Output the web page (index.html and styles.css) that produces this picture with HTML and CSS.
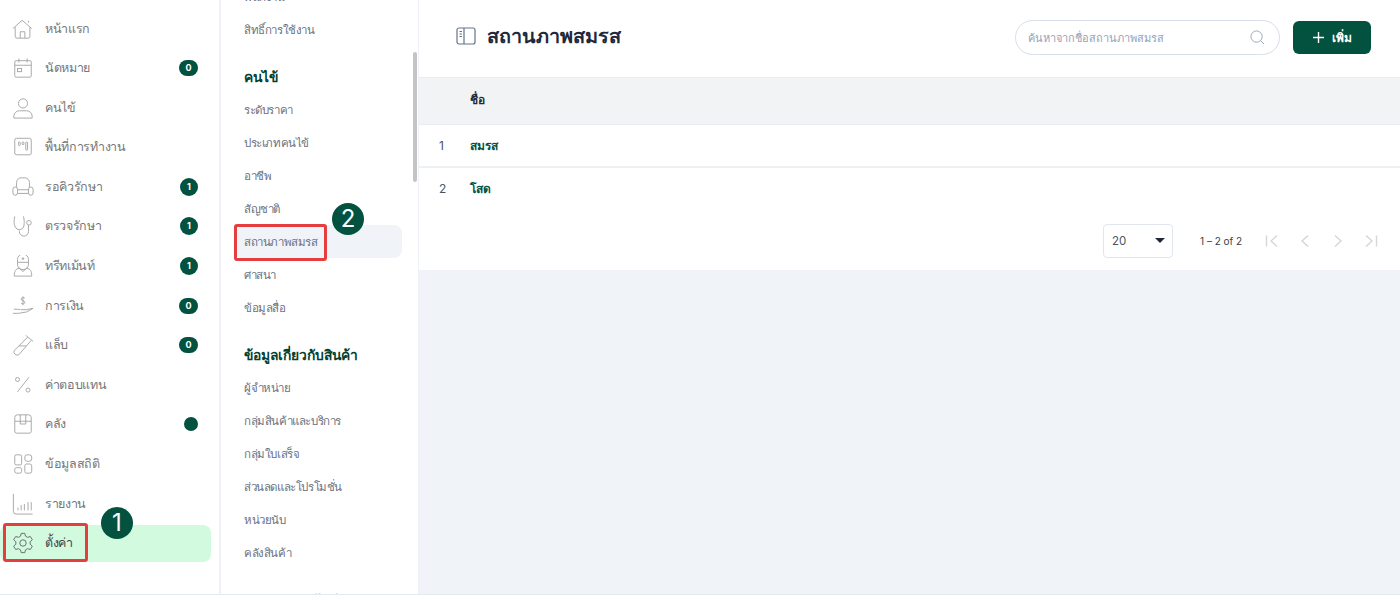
FILE: index.html
```html
<!DOCTYPE html>
<html lang="en">
<head>
  <meta charset="UTF-8" />
  <title>สถานภาพสมรส</title>
  <link rel="stylesheet" href="styles.css">
</head>
<body>

<div class="app">
  <nav class="sidebar">
    <a class="nav-item">
      <svg class="nav-icon" viewBox="0 0 24 24"><path d="M1 11.500 11 2.500l10.500 9M18 5V3M3.500 10v10a2 2 0 0 0 2 2h12a2 2 0 0 0 2-2V10M9 22v-7h5v7"/></svg>
      <span>หน้าแรก</span>
    </a>
    <a class="nav-item">
      <svg class="nav-icon" viewBox="0 0 24 24"><rect x="3" y="4" width="18" height="18" rx="1.500"/><path d="M3 9h18M7.500 1.500V6M16.500 1.500V6"/><rect x="6" y="12.500" width="4.500" height="3.500"/></svg>
      <span>นัดหมาย</span>
      <b class="badge">0</b>
    </a>
    <a class="nav-item">
      <svg class="nav-icon" viewBox="0 0 24 24"><circle cx="12" cy="7" r="5"/><path d="M2 23v-2a6 6 0 0 1 6-6h8a6 6 0 0 1 6 6v2z"/></svg>
      <span>คนไข้</span>
    </a>
    <a class="nav-item">
      <svg class="nav-icon" viewBox="0 0 24 24"><rect x="3" y="2.500" width="18" height="18" rx="2"/><rect x="7" y="6.500" width="2" height="4" rx="1"/><rect x="11" y="6.500" width="2" height="3" rx="1"/><rect x="15" y="6.500" width="2" height="9" rx="1"/></svg>
      <span>พื้นที่การทำงาน</span>
    </a>
    <a class="nav-item">
      <svg class="nav-icon" viewBox="0 0 24 24"><path d="M5 12V7a5 5 0 0 1 5-5h4a5 5 0 0 1 5 5v5M6 15h12M6 19h12"/><rect x="1" y="12" width="5" height="9" rx="2.500"/><rect x="18" y="12" width="5" height="9" rx="2.500"/></svg>
      <span>รอคิวรักษา</span>
      <b class="badge round">1</b>
    </a>
    <a class="nav-item">
      <svg class="nav-icon" viewBox="0 0 24 24"><path d="M3 1.500C2 6 2 10 3.500 13a5 5 0 0 0 9.500-1c.500-3 .500-7-.500-10.500M8 17v1a5 5 0 0 0 10 0v-7"/><circle cx="18.500" cy="8.500" r="2.500"/></svg>
      <span>ตรวจรักษา</span>
      <b class="badge round">1</b>
    </a>
    <a class="nav-item">
      <svg class="nav-icon" viewBox="0 0 24 24"><path d="M6 8V5a6 6 0 0 1 12 0v3zM6 8v2a6 6 0 0 0 12 0V8M12 2.500v3M10.500 4h3M8 14.500c-4 .500-5.500 3-5.500 8.500h19c0-5.500-1.500-8-5.500-8.500l-4 3.500z"/></svg>
      <span>ทรีทเม้นท์</span>
      <b class="badge round">1</b>
    </a>
    <a class="nav-item">
      <svg class="nav-icon" viewBox="0 0 24 24"><path d="M14 3.500C13 2.500 10 2.500 10 4.500s4 1.500 4 3.500-3 2-4 1M12 1.500v9.500M1 20h6l9-1.500 7-4-7 1.500H9.500M2 15.500h4l3 .500"/></svg>
      <span>การเงิน</span>
      <b class="badge">0</b>
    </a>
    <a class="nav-item">
      <svg class="nav-icon" viewBox="0 0 24 24"><path d="M15 1.500 23 8M17 3.500 2.500 18a3.500 3.500 0 0 0 5 4.500L21 7M7.500 13h8"/></svg>
      <span>แล็บ</span>
      <b class="badge">0</b>
    </a>
    <a class="nav-item">
      <svg class="nav-icon" viewBox="0 0 24 24"><path d="M18.500 3.500 6 19.500"/><circle cx="6" cy="6" r="2.200"/><circle cx="17.500" cy="17.500" r="2.200"/></svg>
      <span>ค่าตอบแทน</span>
    </a>
    <a class="nav-item">
      <svg class="nav-icon" viewBox="0 0 24 24"><path d="M6 2h12a3 3 0 0 1 3 3v15a2 2 0 0 1-2 2H5a2 2 0 0 1-2-2V5a3 3 0 0 1 3-3zM3 9h18M9 2v10h6V2"/></svg>
      <span>คลัง</span>
      <b class="dot"></b>
    </a>
    <a class="nav-item">
      <svg class="nav-icon" viewBox="0 0 24 24"><rect x="3" y="2" width="7.500" height="11" rx="1.500"/><rect x="14" y="2" width="7.500" height="7" rx="2.500"/><rect x="3" y="16" width="7.500" height="6" rx="2"/><rect x="14" y="12" width="7.500" height="10" rx="2"/></svg>
      <span>ข้อมูลสถิติ</span>
    </a>
    <a class="nav-item">
      <svg class="nav-icon" viewBox="0 0 24 24"><path d="M1.500 1v19a3 3 0 0 0 3 3h18M6.500 19v-3M10 19v-6M13.500 19v-7M17.500 19v-9M21 19v-9"/></svg>
      <span>รายงาน</span>
    </a>
    <a class="nav-item active">
      <svg class="nav-icon" viewBox="0 0 24 24"><circle cx="12" cy="12" r="3.500"/><path d="M10 1.500h4l.700 3 2.300 1.300 3-.900 2.200 3.600-2.400 2.200v2.600l2.400 2.200-2.200 3.600-3-.900-2.300 1.300-.700 3h-4l-.700-3L7 18.200l-3 .900-2.200-3.600 2.400-2.200v-2.600L1.800 8.500 4 4.900l3 .900 2.300-1.300z"/></svg>
      <span>ตั้งค่า</span>
    </a>
    <div class="callout-box box-settings"></div>
    <div class="step step-one">1</div>
  </nav>

  <aside class="submenu">
    <div class="submenu-list">
      <a class="sub-item">พนักงาน</a>
      <a class="sub-item">สิทธิ์การใช้งาน</a>
      <h4 class="sub-title">คนไข้</h4>
      <a class="sub-item">ระดับราคา</a>
      <a class="sub-item">ประเภทคนไข้</a>
      <a class="sub-item">อาชีพ</a>
      <a class="sub-item">สัญชาติ</a>
      <a class="sub-item active">สถานภาพสมรส</a>
      <a class="sub-item">ศาสนา</a>
      <a class="sub-item">ข้อมูลสื่อ</a>
      <h4 class="sub-title">ข้อมูลเกี่ยวกับสินค้า</h4>
      <a class="sub-item">ผู้จำหน่าย</a>
      <a class="sub-item">กลุ่มสินค้าและบริการ</a>
      <a class="sub-item">กลุ่มใบเสร็จ</a>
      <a class="sub-item">ส่วนลดและโปรโมชั่น</a>
      <a class="sub-item">หน่วยนับ</a>
      <a class="sub-item">คลังสินค้า</a>
      <h4 class="sub-title">ประเภทการรับเงิน</h4>
    </div>
    <div class="scrollbar"></div>
    <div class="callout-box box-marital"></div>
    <div class="step step-two">2</div>
  </aside>

  <main class="content">
    <div class="panel">
      <div class="page-head">
        <svg class="head-icon" viewBox="0 0 20 18"><rect x="1" y="1" width="18" height="16" rx="2"/><path d="M8 1v16M3.500 4.500H6M3.500 7H6M3.500 9.500H6"/></svg>
        <h1>สถานภาพสมรส</h1>
        <div class="search">
          <span>ค้นหาจากชื่อสถานภาพสมรส</span>
          <svg viewBox="0 0 16 16"><circle cx="7" cy="7" r="6"/><path d="m11.500 11.500 3.500 3.500"/></svg>
        </div>
        <button class="add-btn"><svg viewBox="0 0 12 12"><path d="M6 0v12M0 6h12"/></svg>เพิ่ม</button>
      </div>

      <div class="row row-head"><span class="cell-no"></span><span class="cell-name">ชื่อ</span></div>
      <div class="row"><span class="cell-no">1</span><span class="cell-name">สมรส</span></div>
      <div class="row row-last"><span class="cell-no">2</span><span class="cell-name">โสด</span></div>

      <div class="pager">
        <div class="page-size">20<i></i></div>
        <span class="page-info">1 – 2 of 2</span>
        <svg class="page-btn" viewBox="0 0 14 14"><path d="M1.500 1.500v11M12 1.500 6 7l6 5.500"/></svg>
        <svg class="page-btn" viewBox="0 0 14 14"><path d="M10 1.500 4 7l6 5.500"/></svg>
        <svg class="page-btn" viewBox="0 0 14 14"><path d="m4 1.500 6 5.500-6 5.500"/></svg>
        <svg class="page-btn" viewBox="0 0 14 14"><path d="M12.500 1.500v11M2 1.500 8 7l-6 5.500"/></svg>
      </div>
    </div>
  </main>
</div>
<div class="footer-bar"></div>

</body>
</html>
```

FILE: styles.css
```css
* {
  box-sizing: border-box;
}

html, body {
  height: 100%;
}

body {
  margin: 0;
  overflow: hidden;
  font-family: Inter, "Noto Sans", "Liberation Sans", sans-serif;
  background-color: #fff;
  color: #1f2937;
}

.app {
  display: flex;
  height: 594px;
}

/* main nav */
.sidebar {
  position: relative;
  flex: 0 0 221px;
  padding-top: 10px;
  background-color: #fff;
  border-right: 2px solid #eef1f6;
}

.nav-item {
  display: flex;
  align-items: center;
  height: 37px;
  margin: 0 8px 2.6px 0;
  padding: 0 13px 0 12px;
  border-radius: 8px;
  font-size: 12.5px;
  letter-spacing: -0.35px;
  color: #777;
}

.nav-item.active {
  background-color: #d1fadf;
  color: #444;
}

.nav-icon {
  flex: 0 0 22px;
  width: 22px;
  height: 22px;
  margin-right: 11px;
  fill: none;
  stroke: #a3a3a3;
  stroke-width: 1;
}

.nav-item.active .nav-icon {
  stroke: #666;
}

.nav-item span {
  flex: 1;
}

.badge {
  min-width: 19px;
  height: 16px;
  padding: 0 5px;
  border-radius: 8px;
  background-color: #03523f;
  color: #fff;
  font-size: 9px;
  letter-spacing: 0;
  line-height: 16px;
  text-align: center;
}

.badge.round {
  min-width: 18px;
  height: 18px;
  padding: 0;
  border-radius: 50%;
  line-height: 18px;
}

.dot {
  width: 14px;
  height: 14px;
  border-radius: 50%;
  background-color: #03523f;
}

/* settings submenu */
.submenu {
  position: relative;
  flex: 0 0 198px;
  overflow: hidden;
  background-color: #fff;
  border-right: 1px solid #eef1f6;
}

.submenu-list {
  margin-top: -20px;
  padding: 0 16px 0 13px;
}

.sub-item {
  display: block;
  height: 33px;
  padding: 1px 0 0 10px;
  border-radius: 8px;
  font-size: 11.5px;
  letter-spacing: -0.4px;
  line-height: 33px;
  color: #6b7280;
}

.sub-item.active {
  background-color: #f0f3f8;
}

.sub-title {
  height: 33px;
  margin: 14px 0 0;
  padding: 1px 0 0 10px;
  font-size: 13.8px;
  font-weight: 700;
  line-height: 33px;
  color: #03412f;
}

.scrollbar {
  position: absolute;
  top: 52px;
  right: 1px;
  width: 4px;
  height: 130px;
  border-radius: 2px;
  background-color: #c4c4c4;
}

/* annotations laid over the screenshot */
.callout-box {
  position: absolute;
  border: 3px solid #e53e3e;
  border-radius: 3px;
}

.box-settings {
  left: 3px;
  top: 523px;
  width: 85px;
  height: 39px;
}

.box-marital {
  left: 13px;
  top: 224px;
  width: 93px;
  height: 37px;
}

.step {
  position: absolute;
  width: 32px;
  height: 32px;
  border-radius: 50%;
  background-color: #03523f;
  color: #fff;
  font-size: 24px;
  line-height: 32px;
  text-align: center;
}

.step-one {
  left: 101px;
  top: 507px;
}

.step-two {
  left: 111px;
  top: 203px;
}

/* content */
.content {
  flex: 1;
  background-color: #f0f3f8;
}

.panel {
  background-color: #fff;
}

.page-head {
  display: flex;
  align-items: center;
  height: 78px;
  padding: 0 29px 2px 37px;
  border-bottom: 1px solid #e9ecf1;
}

.head-icon {
  width: 20px;
  height: 18px;
  margin: 0 11px 4px 0;
  fill: none;
  stroke: #64748b;
  stroke-width: 1.200;
}

.page-head h1 {
  flex: 1;
  margin: 0 0 4px;
  font-size: 19.8px;
  font-weight: 700;
  color: #1e293b;
}

.search {
  display: flex;
  align-items: center;
  justify-content: space-between;
  width: 265px;
  height: 35px;
  margin-right: 13px;
  padding: 0 14px 0 12px;
  border: 1px solid #d8deea;
  border-radius: 18px;
  font-size: 11px;
  color: #94a3b8;
}

.search svg {
  width: 15px;
  height: 15px;
  fill: none;
  stroke: #94a3b8;
}

.add-btn {
  display: flex;
  align-items: center;
  justify-content: center;
  width: 78px;
  height: 33px;
  border: 0;
  border-radius: 6px;
  background-color: #03523f;
  color: #fff;
  font-family: inherit;
  font-size: 12px;
  font-weight: 700;
}

.add-btn svg {
  width: 11px;
  height: 11px;
  margin-right: 8px;
  stroke: #fff;
  stroke-width: 1.500;
}

.row {
  display: flex;
  align-items: center;
  height: 43px;
  border-bottom: 2px solid #eef1f4;
  font-size: 12px;
}

.row-last {
  border-bottom: 0;
  padding-bottom: 2px;
}

.row-head {
  height: 47px;
  padding-bottom: 4px;
  background-color: #f1f3f5;
  border-bottom: 1px solid #e9ecf1;
  font-weight: 700;
}

.row-head .cell-name {
  color: #1f2937;
}

.cell-no {
  width: 51px;
  padding-left: 20px;
  color: #4b5563;
}

.cell-name {
  font-weight: 700;
  color: #03523f;
}

.pager {
  display: flex;
  align-items: center;
  height: 59px;
  padding-left: 684px;
  font-size: 10px;
  color: #374151;
}

.page-size {
  display: flex;
  align-items: center;
  justify-content: space-between;
  width: 70px;
  height: 34px;
  padding: 0 7px 0 8px;
  border: 1px solid #e0e5ee;
  border-radius: 4px;
  font-size: 11.5px;
  color: #4b5563;
}

.page-size i {
  border-top: 5px solid #1f2937;
  border-left: 5px solid transparent;
  border-right: 5px solid transparent;
}

.page-info {
  margin: 0 23px 0 27px;
}

.page-btn {
  width: 14px;
  height: 14px;
  margin-right: 19px;
  fill: none;
  stroke: #d6d6d6;
  stroke-width: 1.400;
}

.footer-bar {
  height: 6px;
  background-color: #fff;
  border-top: 1px solid #e5e9f0;
}
```
